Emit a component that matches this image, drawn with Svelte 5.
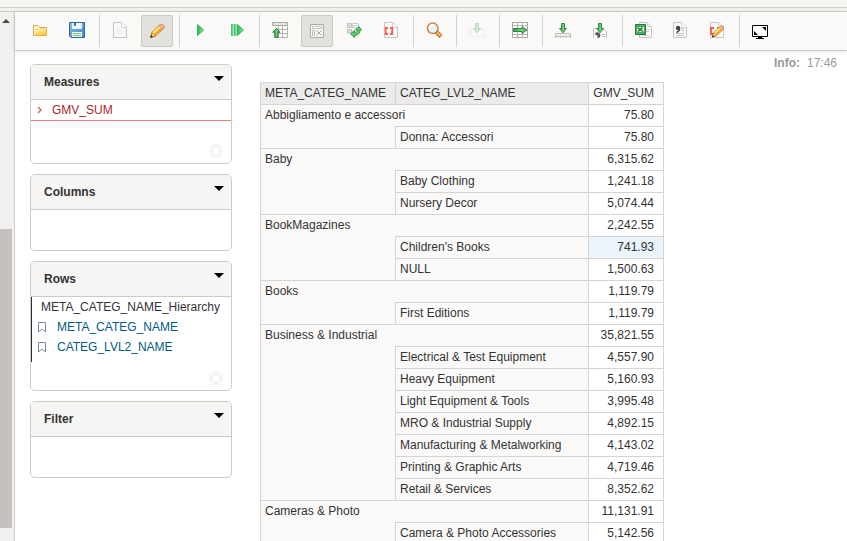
<script>
  const toolbar = [
    [{ icon: 'open', label: 'Open query' }, { icon: 'save', label: 'Save query' }],
    [{ icon: 'new', label: 'New query' }, { icon: 'edit', label: 'Toggle edit mode', on: true }],
    [{ icon: 'run', label: 'Run query' }, { icon: 'auto', label: 'Automatic execution' }],
    [
      { icon: 'parents', label: 'Hide parents' },
      { icon: 'nonempty', label: 'Non-empty', on: true },
      { icon: 'swap', label: 'Swap axes' },
      { icon: 'mdx', label: 'Show MDX' }
    ],
    [{ icon: 'zoom', label: 'Zoom in on table' }],
    [{ icon: 'across', label: 'Drill across', off: true }],
    [{ icon: 'through', label: 'Drill through' }],
    [{ icon: 'export', label: 'Export drill through' }, { icon: 'exportcsv', label: 'Export drill through as CSV' }],
    [{ icon: 'xls', label: 'Export XLS' }, { icon: 'csv', label: 'Export CSV' }, { icon: 'mdxedit', label: 'Switch to MDX mode' }],
    [{ icon: 'full', label: 'Full screen' }]
  ];

  const panels = [
    { title: 'Measures', kind: 'measures' },
    { title: 'Columns', kind: 'empty' },
    { title: 'Rows', kind: 'rows' },
    { title: 'Filter', kind: 'empty' }
  ];

  const levels = ['META_CATEG_NAME', 'CATEG_LVL2_NAME'];

  const groups = [
    { name: 'Abbigliamento e accessori', total: '75.80', items: [['Donna: Accessori', '75.80']] },
    { name: 'Baby', total: '6,315.62', items: [['Baby Clothing', '1,241.18'], ['Nursery Decor', '5,074.44']] },
    { name: 'BookMagazines', total: '2,242.55', items: [["Children's Books", '741.93'], ['NULL', '1,500.63']] },
    { name: 'Books', total: '1,119.79', items: [['First Editions', '1,119.79']] },
    {
      name: 'Business & Industrial',
      total: '35,821.55',
      items: [
        ['Electrical & Test Equipment', '4,557.90'],
        ['Heavy Equipment', '5,160.93'],
        ['Light Equipment & Tools', '3,995.48'],
        ['MRO & Industrial Supply', '4,892.15'],
        ['Manufacturing & Metalworking', '4,143.02'],
        ['Printing & Graphic Arts', '4,719.46'],
        ['Retail & Services', '8,352.62']
      ]
    },
    { name: 'Cameras & Photo', total: '11,131.91', items: [['Camera & Photo Accessories', '5,142.56']] }
  ];

  const highlighted = "Children's Books";
</script>

{#snippet page()}
  <path d="M1.5 .5H10L14.5 5V15.5H1.5Z" fill="#fbfbfb" stroke="#c6c4c2" />
  <path d="M9.5 .5V5.5H14.5" fill="#fff" stroke="#d2d0ce" />
{/snippet}

{#snippet downArrow(x, y)}
  <path transform="translate({x} {y})" d="M2.5 .5H5.5V5.5H7.5L4 9.8L.5 5.5H2.5Z" fill="url(#green)" stroke="#2f8c45" />
{/snippet}

{#snippet pencil()}
  <path d="M2 15L2.8 10.5L11 2.6Q12.5 1.6 14.2 3Q15.8 4.6 14.8 6.2L6.5 14Z" fill="#fbc53b" stroke="#d8892a" />
  <path d="M4.2 11L11.5 4" stroke="#ffed91" stroke-width="1.5" />
  <path d="M6 13L13.3 6" stroke="#ed9d2d" stroke-width="1.5" />
  <path d="M11 3Q12.6 1.8 14 3.2T14.5 6L13 7L10.2 4.2Z" fill="#f8bda1" stroke="#c7866e" stroke-width=".7" />
  <path d="M2.8 10.8L6.3 14L1.8 15.5Z" fill="#f6ddb4" stroke="#ae662a" stroke-width=".7" />
  <path d="M1 16L2 12.8L4.2 15Z" fill="#593016" />
{/snippet}

{#snippet glyph(name)}
  <svg class="glyph" viewBox="0 0 16 16" fill="none" aria-hidden="true">
    {#if name === 'open'}
      <path d="M1.5 13.5V3.5H6L7.5 5.5H14.5V13.5Z" fill="#fff4cd" stroke="#e6a84c" />
      <path d="M2.5 13V9H7L8.5 7.5H14V13Z" fill="url(#gold)" />
      <path d="M3 7.5H7L8 6.5H13" stroke="#f1ce7b" />
    {:else if name === 'save'}
      <path d="M.5 .5H15.5V15.5H2L.5 14Z" fill="url(#blue)" stroke="#2268ae" />
      <path d="M3 1H13V7H3Z" fill="#e8f2fa" />
      <path d="M5 1H11V5H5Z" fill="#fff" />
      <path d="M5 1H7V4H5Z" fill="#3976b1" />
      <path d="M3 10H13V15H3Z" fill="#f5fbf4" />
      <path d="M4 11.5H12M4 13.5H12" stroke="#79bd68" />
    {:else if name === 'new'}
      {@render page()}
      <path d="M4 4H8V7H12V13H4Z" fill="#f3f3f3" />
    {:else if name === 'edit'}
      {@render pencil()}
    {:else if name === 'run'}
      <path d="M5.5 2.5L11.7 8L5.5 13.5Z" fill="url(#play)" stroke="#35b863" />
    {:else if name === 'auto'}
      <path d="M2.5 2.5H4V13.5H2.5ZM5.5 2.5H7V13.5H5.5Z" fill="#9bdfae" stroke="#4ac274" />
      <path d="M8.5 2.5L14.5 8L8.5 13.5Z" fill="url(#play)" stroke="#35b863" />
    {:else if name === 'parents'}
      <path d="M6 4H16V16H6Z" fill="#fff" />
      <path d="M.5 .5H15.5V3.5H.5Z" fill="#e6e5e2" stroke="#aaa8a2" />
      <path d="M6.5 4V15.5H15.5V4M10.5 4V15M6.5 7.5H15.5M6.5 11.5H15.5" stroke="#b4b1aa" />
      <path d="M4.5 6.2L8 10.2H6V15.5H2.8V10.2H.8Z" fill="url(#green)" stroke="#28793b" />
    {:else if name === 'nonempty'}
      <path d="M1.5 2.5H14.5V15.5H1.5Z" fill="#f7f7f6" stroke="#aaa9a6" />
      <path d="M3.5 4.5H12.5V6.5H3.5ZM3.5 8.5H5.5V13.5H3.5Z" fill="#fff" stroke="#c3c1be" />
      <path d="M7.5 8.5L12.5 13.5M12.5 8.5L7.5 13.5" stroke="#aaa" />
    {:else if name === 'swap'}
      <path d="M1.5 1.5H5.5V5.5H1.5ZM1.5 7.5H5.5V11H1.5Z" fill="#dddcd9" stroke="#c3c1bd" />
      <path d="M6.5 1.5H12.5V5.5H6.5Z" fill="#fff" stroke="#c9c7c3" />
      <path d="M7.5 3.5H11.5" stroke="#a9d0df" />
      <path d="M4.5 11.8L8.5 8.5V10.6Q11.5 10.6 11.7 8H9.5L12.8 4.5L15.5 8H14Q14 13.3 8.5 13.4V15.5Z" fill="#62ca72" stroke="#30984a" />
    {:else if name === 'mdx'}
      {@render page()}
      <path d="M1 5H10V13H1Z" fill="#fff" />
      <path d="M5 6H2.5V12H5M7 6H9.2V12H7" stroke="#ff5b52" stroke-width="2" />
    {:else if name === 'zoom'}
      <path d="M10.5 10L15 14.5" stroke="#b16a2d" stroke-width="4" />
      <path d="M11.2 10.5L14.6 13.8" stroke="#f3c56e" stroke-width="2" />
      <circle cx="6.7" cy="6.2" r="5.3" fill="#e4f2fb" stroke="#cb843e" stroke-width="1.5" />
      <path d="M3.5 6A3.2 3.2 0 0 1 7 3" stroke="#fff" stroke-width="1.5" />
    {:else if name === 'across'}
      <path d="M.5 7.5H15.5V14.5H.5Z" fill="#fff" stroke="#d5d3d0" />
      <path d="M2.5 9V13" stroke="#ccc" />
      {@render downArrow(4, 1)}
    {:else if name === 'through'}
      <path d="M.5 .5H15.5V15.5H.5Z" fill="#fff" stroke="#aaa8a3" />
      <path d="M.5 3.5H15.5M.5 12.5H15.5M5.5 .5V15.5M10.5 .5V15.5" stroke="#b5b3ae" />
      <path d="M1.5 6.5H10V4.5L15 8L10 11.5V9.5H1.5Z" fill="url(#green)" stroke="#2d8641" />
    {:else if name === 'export'}
      <path d="M.5 16V11.5H15.5V16M.5 14.5H15.5M5.5 14V16" fill="#eeedeb" stroke="#c3c1bc" />
      {@render downArrow(4, 1)}
    {:else if name === 'exportcsv'}
      <path d="M1.5 16V6.5H11L14.5 10V16" fill="#fafafa" stroke="#c6c4c2" />
      <path d="M10 12.5H13M10 14.5H13" stroke="#bbb" />
      <path d="M3 11Q6.5 9 8 12T6 16H5Q6.5 14.5 5.5 13.5Q3 13.5 3 11Z" fill="#555" />
      {@render downArrow(4, 1)}
    {:else if name === 'xls'}
      <path d="M4.5 .5H12L16.5 5V15.5H4.5Z" fill="#fff" stroke="#c6c4c2" />
      <path d="M12.5 .5V4.5H16.5M11 7.5H14.5M11 9.5H14.5M7 13.5H14.5" stroke="#cdccc9" />
      <path d="M.5 2.5H10.5V12.5H.5Z" fill="#4cac60" stroke="#267b3b" />
      <path d="M2 5H9V10H2Z" fill="#d8f0d9" />
      <path d="M2.5 5.5L8 9.5M7.5 5.5L3 9.5" stroke="#287b39" stroke-width="1.5" />
    {:else if name === 'csv'}
      {@render page()}
      <path d="M9 6.5H12M9 8.5H12M4 11.5H12M4 13.5H12" stroke="#c0bfbd" />
      <circle cx="6" cy="6" r="2.2" fill="#444" />
      <path d="M7.2 5.5Q8.5 8.5 4.5 10.5" stroke="#444" stroke-width="1.5" />
    {:else if name === 'mdxedit'}
      {@render page()}
      <path d="M5 6H2V12H5M8 6H10" stroke="#ff5b52" stroke-width="2" />
      <g transform="translate(2 2) scale(.84)">{@render pencil()}</g>
    {:else if name === 'full'}
      <path d="M.5 3.5H15.5V14.5H.5Z" fill="#fff" stroke="#000" />
      <path d="M10 5H14V9ZM2 9V13H6Z" fill="#000" />
      <path d="M6 15.5H10M4 16.5H12" stroke="#000" />
    {/if}
  </svg>
{/snippet}

{#snippet clear(label)}
  <button class="clear" aria-label={label}>
    <svg viewBox="0 0 14 14" fill="none" aria-hidden="true">
      <circle cx="7" cy="7" r="7" fill="#f5f4f2" />
      <path d="M4 4L10 10M10 4L4 10" stroke="#fff" stroke-width="2" />
    </svg>
  </button>
{/snippet}

<svg class="defs" aria-hidden="true">
  <defs>
    <linearGradient id="green" x2="1"><stop stop-color="#2f9d49" /><stop offset=".6" stop-color="#78cc80" /><stop offset="1" stop-color="#48ab58" /></linearGradient>
    <linearGradient id="play" x2="1"><stop stop-color="#27b457" /><stop offset="1" stop-color="#a1e4ad" /></linearGradient>
    <linearGradient id="gold" x2="1" y2="1"><stop stop-color="#fff2a8" /><stop offset="1" stop-color="#fbc52d" /></linearGradient>
    <linearGradient id="blue" x2="1" y2="1"><stop stop-color="#91bce1" /><stop offset="1" stop-color="#3c87cc" /></linearGradient>
  </defs>
</svg>

<div class="app">
  <div class="strip"></div>
  <div class="gutter"></div>
  <div class="workspace">
    <div class="scroll">
      <span class="up"></span>
      <span class="before"></span>
      <span class="thumb"></span>
      <span class="after"></span>
    </div>
    <main>
      <div class="toolbar" role="toolbar" aria-label="Query tools">
        {#each toolbar as group}
          <div class="group">
            {#each group as tool}
              <button class="tool" class:on={tool.on} class:off={tool.off} aria-label={tool.label} title={tool.label}>
                {@render glyph(tool.icon)}
              </button>
            {/each}
          </div>
        {/each}
      </div>

      <div class="content">
        <aside>
          {#each panels as panel}
            <section class="panel">
              <header>
                <h2>{panel.title}</h2>
                <button class="toggle" aria-label="Toggle {panel.title}"><span class="caret"></span></button>
              </header>
              <div class="body">
                {#if panel.kind === 'measures'}
                  <a class="measure" href="#gmv">
                    <svg viewBox="0 0 12 12" fill="none" aria-hidden="true"><path d="M4 3L7 6L4 9" stroke="#c4605c" stroke-width="1.3" /></svg>
                    GMV_SUM
                  </a>
                  {@render clear('Clear measures')}
                {:else if panel.kind === 'rows'}
                  <div class="hierarchy">
                    <div class="hname">META_CATEG_NAME_Hierarchy</div>
                    {#each levels as level}
                      <a class="level" href="#{level}">
                        <svg viewBox="0 0 12 12" fill="none" aria-hidden="true"><path d="M2.5 1.5H9.5V11L6 8L2.5 11Z" stroke="#7788a5" /></svg>
                        {level}
                      </a>
                    {/each}
                  </div>
                  {@render clear('Clear rows')}
                {/if}
              </div>
            </section>
          {/each}
        </aside>

        <div class="results">
          <div class="info"><b>Info:</b><span>17:46</span></div>
          <table>
            <colgroup><col class="c1" /><col class="c2" /><col class="c3" /></colgroup>
            <thead>
              <tr><th class="dim">META_CATEG_NAME</th><th class="dim">CATEG_LVL2_NAME</th><th class="num">GMV_SUM</th></tr>
            </thead>
            {#each groups as group}
              <tbody>
                <tr><th class="parent" colspan="2">{group.name}</th><td>{group.total}</td></tr>
                {#each group.items as [name, value], i}
                  <tr>
                    {#if i === 0}<th class="blank" rowspan={group.items.length}></th>{/if}
                    <th class="child">{name}</th>
                    <td class:hot={name === highlighted}>{value}</td>
                  </tr>
                {/each}
              </tbody>
            {/each}
          </table>
        </div>
      </div>
    </main>
  </div>
</div>

<style>
  :global(body) {
    margin: 0;
    background: #fff;
  }
  .defs {
    position: absolute;
    width: 0;
    height: 0;
  }
  .app {
    display: flex;
    flex-direction: column;
    height: 100vh;
    overflow: hidden;
    font: 12px/20px "Liberation Sans", Arial, sans-serif;
    color: #333;
  }
  button {
    display: flex;
    align-items: center;
    justify-content: center;
    padding: 0;
    border: 0;
    background: none;
  }
  a {
    text-decoration: none;
  }
  .strip {
    flex: none;
    height: 7px;
    background: #f6f5f4;
    border-bottom: 1px solid #cecdc8;
  }
  .gutter {
    flex: none;
    height: 3px;
    background: #f1f0ef;
    border-bottom: 1px solid #cecdc8;
  }
  .workspace {
    flex: 1;
    min-height: 0;
    display: flex;
  }
  .scroll {
    flex: none;
    display: flex;
    flex-direction: column;
    width: 14px;
    background: #f1f0ee;
    border-right: 1px solid #cecdc8;
  }
  .up {
    margin: 7px 0 0 2px;
    width: 0;
    border: 4px solid transparent;
    border-top: 0;
    border-bottom-color: #4c4b46;
  }
  .before {
    flex: 206;
  }
  .thumb {
    flex: 299;
    width: 12px;
    background: #c5c2bb;
  }
  .after {
    flex: 13;
  }
  main {
    flex: 1;
    min-width: 0;
    display: flex;
    flex-direction: column;
  }
  .toolbar {
    flex: none;
    display: flex;
    padding: 3px 0 3px 5px;
    background: #faf9f7;
    border-bottom: 1px solid #cecdc8;
    box-shadow: 0 1px 4px #0000001a;
  }
  .group {
    display: flex;
    gap: 5px;
    padding: 0 6px 0 4px;
    border-right: 1px solid #d3d1ce;
  }
  .group:last-child {
    border-right: 0;
  }
  .tool {
    box-sizing: border-box;
    width: 32px;
    height: 32px;
    padding-bottom: 2px;
    border-radius: 3px;
  }
  .tool.on {
    background: #e2e1dd;
    box-shadow: inset 0 0 0 1px #ccc9c2;
  }
  .tool.off .glyph {
    opacity: 0.3;
  }
  .glyph {
    width: 16px;
    height: 16px;
    overflow: visible;
  }
  .content {
    flex: 1;
    min-height: 0;
    display: flex;
    align-items: flex-start;
    gap: 28px;
    padding-left: 15px;
  }
  aside {
    flex: none;
    width: 202px;
    display: flex;
    flex-direction: column;
    gap: 10px;
    padding-top: 13px;
  }
  .panel {
    border: 1px solid #cecbc5;
    border-radius: 5px;
    overflow: hidden;
  }
  .panel header {
    display: flex;
    align-items: flex-start;
    justify-content: space-between;
    padding: 7px 6px 7px 13px;
    background: #f6f5f4;
    border-bottom: 1px solid #cecbc5;
  }
  h2 {
    margin: 0;
    font-size: 12px;
    line-height: 20px;
  }
  .toggle {
    width: 12px;
    height: 12px;
  }
  .caret {
    border: 5px solid transparent;
    border-top-color: #000;
    border-bottom: 0;
  }
  .body {
    display: flex;
    flex-direction: column;
    min-height: 40px;
  }
  .measure,
  .level {
    display: flex;
    align-items: center;
    gap: 9px;
    color: #005c7f;
  }
  .measure svg,
  .level svg {
    width: 12px;
    height: 12px;
  }
  .measure {
    padding-left: 0;
    color: #a9262c;
    border-bottom: 1px solid #f08080;
  }
  .measure svg {
    margin-left: 3px;
    margin-right: -3px;
  }
  .measure {
    gap: 9px;
  }
  .hierarchy {
    padding: 0 0 5px 4px;
    border-left: 1px solid #333;
  }
  .hname {
    padding-left: 5px;
  }
  .clear {
    align-self: flex-end;
    margin: 23px 8px 5px 0;
    width: 14px;
    height: 14px;
  }
  .hierarchy + .clear {
    margin-top: 9px;
  }
  .clear svg {
    width: 14px;
    height: 14px;
  }
  .results {
    flex: 1;
    min-width: 0;
  }
  .info {
    display: flex;
    justify-content: flex-end;
    gap: 7px;
    padding: 2px 10px 9px 0;
    color: #999;
  }
  table {
    table-layout: fixed;
    width: 404px;
    border-collapse: collapse;
  }
  .c1 {
    width: 135px;
  }
  .c2 {
    width: 193px;
  }
  .c3 {
    width: 75px;
  }
  th,
  td {
    height: 21px;
    padding: 0 4px;
    line-height: 21px;
    font-weight: 400;
    text-align: left;
    white-space: nowrap;
    border: 1px solid #d6d4d1;
    background: #faf9f8;
  }
  .dim {
    background: #ecebe9;
  }
  td,
  .num {
    padding-right: 9px;
    text-align: right;
  }
  td {
    background: #fff;
  }
  td.hot {
    background: #ebf3fb;
  }
  .parent {
    border-bottom: 0;
  }
  .blank {
    border-top: 0;
  }
</style>
